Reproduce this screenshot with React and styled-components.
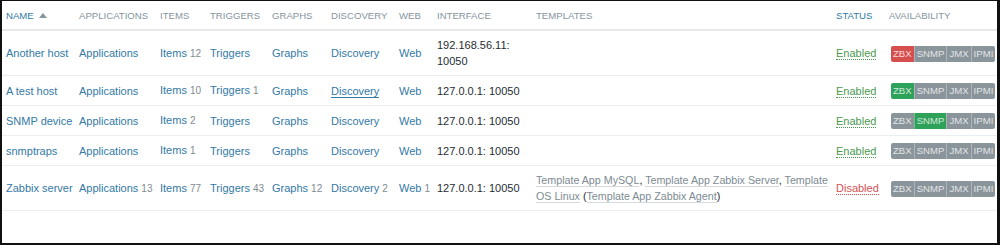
import React from 'react'
import styled, { createGlobalStyle } from 'styled-components'

const GlobalStyle = createGlobalStyle`
    html, body {
        margin: 0;
        padding: 0;
        background: #ffffff;
    }
    body {
        font-family: "Liberation Sans", Arial, sans-serif;
    }
`

const Frame = styled.div`
    box-sizing: border-box;
    width: 1000px;
    height: 245px;
    border-top: 1px solid #111;
    border-left: 2px solid #111;
    border-right: 3px solid #111;
    border-bottom: 2px solid #111;
    background: #fff;
    overflow: hidden;
`

const Table = styled.table`
    width: 995px;
    border-collapse: collapse;
    table-layout: fixed;
    font-size: 11px;
    color: #1f2c33;
`

const Th = styled.th`
    text-align: left;
    font-weight: normal;
    font-size: 9.6px;
    text-transform: uppercase;
    color: ${({ active }) => (active ? '#3379a6' : '#85959e')};
    padding: 0 4px;
    height: 28px;
    border-bottom: 2px solid #e6e9eb;
    white-space: nowrap;
`

const Arrow = styled.span`
    display: inline-block;
    margin-left: 5px;
    width: 0;
    height: 0;
    border-left: 4px solid transparent;
    border-right: 4px solid transparent;
    border-bottom: 5px solid #85959e;
    vertical-align: 1px;
`

const Tr = styled.tr`
    border-bottom: 1px solid #ebeef0;
`

const Td = styled.td`
    padding: 6px 4px;
    line-height: 16px;
    vertical-align: middle;
    white-space: ${({ wrap }) => (wrap ? 'normal' : 'nowrap')};
    font-size: ${({ small }) => (small ? '10.7px' : '11px')};
`

const Link = styled.a`
    color: #3379a6;
    text-decoration: none;
    border-bottom: ${({ underline }) => (underline ? '1px solid #3379a6' : 'none')};
`

const Count = styled.sup`
    vertical-align: baseline;
    font-size: 10px;
    color: #7f8a90;
    margin-left: 3px;
`

const TemplateLink = styled.a`
    color: #7d8b93;
    text-decoration: none;
    border-bottom: 1px solid #d5dadd;
`

const Status = styled.span`
    color: ${({ on }) => (on ? '#4a9a4e' : '#d35353')};
    border-bottom: 1px dotted ${({ on }) => (on ? '#4a9a4e' : '#d35353')};
`

const Badges = styled.div`
    display: inline-flex;
    border-radius: 2px;
    overflow: hidden;
    vertical-align: middle;
    margin-left: 2px;
`

const Badge = styled.span`
    font-size: 9.6px;
    line-height: 16px;
    padding: 0 2px;
    text-align: center;
    color: rgba(255, 255, 255, 0.78);
    background: ${({ state }) =>
        state === 'bad' ? '#d64f4f' : state === 'good' ? '#2fa25a' : '#8a949b'};
    border-left: 1px solid rgba(255, 255, 255, 0.3);
    &:first-child {
        border-left: none;
    }
`

const cols = [73, 81, 50, 62, 59, 68, 38, 99, 300, 53, 112]

const hosts = [
    {
        name: 'Another host',
        apps: null, items: 12, triggers: null, graphs: null, discovery: null, web: null,
        iface: ['192.168.56.11:', '10050'],
        enabled: true, avail: { ZBX: 'bad' },
    },
    {
        name: 'A test host',
        apps: null, items: 10, triggers: 1, graphs: null, discovery: null, web: null,
        iface: ['127.0.0.1: 10050'], discoveryUnderline: true,
        enabled: true, avail: { ZBX: 'good' },
    },
    {
        name: 'SNMP device',
        apps: null, items: 2, triggers: null, graphs: null, discovery: null, web: null,
        iface: ['127.0.0.1: 10050'],
        enabled: true, avail: { SNMP: 'good' },
    },
    {
        name: 'snmptraps',
        apps: null, items: 1, triggers: null, graphs: null, discovery: null, web: null,
        iface: ['127.0.0.1: 10050'],
        enabled: true, avail: {},
    },
    {
        name: 'Zabbix server',
        apps: 13, items: 77, triggers: 43, graphs: 12, discovery: 2, web: 1,
        iface: ['127.0.0.1: 10050'],
        templates: true,
        enabled: false, avail: {},
    },
]

const Cell = ({ label, count, underline }) => (
    <Td>
        <Link href="#" underline={underline}>{label}</Link>
        {count != null && <Count>{count}</Count>}
    </Td>
)

const App = () => {
    return (
        <Frame>
            <GlobalStyle />
            <Table>
                <colgroup>
                    {cols.map((w, i) => <col key={i} style={{ width: w }} />)}
                </colgroup>
                <thead>
                    <tr>
                        <Th active>Name<Arrow /></Th>
                        <Th>Applications</Th>
                        <Th>Items</Th>
                        <Th>Triggers</Th>
                        <Th>Graphs</Th>
                        <Th>Discovery</Th>
                        <Th>Web</Th>
                        <Th>Interface</Th>
                        <Th>Templates</Th>
                        <Th active>Status</Th>
                        <Th>Availability</Th>
                    </tr>
                </thead>
                <tbody>
                    {hosts.map((h) => (
                        <Tr key={h.name}>
                            <Cell label={h.name} />
                            <Cell label="Applications" count={h.apps} />
                            <Cell label="Items" count={h.items} />
                            <Cell label="Triggers" count={h.triggers} />
                            <Cell label="Graphs" count={h.graphs} />
                            <Cell label="Discovery" count={h.discovery} underline={h.discoveryUnderline} />
                            <Cell label="Web" count={h.web} />
                            <Td>
                                {h.iface.map((line, i) => <div key={i}>{line}</div>)}
                            </Td>
                            <Td wrap small>
                                {h.templates && (
                                    <>
                                        <TemplateLink href="#">Template App MySQL</TemplateLink>,{' '}
                                        <TemplateLink href="#">Template App Zabbix Server</TemplateLink>,{' '}
                                        <TemplateLink href="#">Template OS Linux</TemplateLink> (
                                        <TemplateLink href="#">Template App Zabbix Agent</TemplateLink>)
                                    </>
                                )}
                            </Td>
                            <Td>
                                <Status on={h.enabled}>{h.enabled ? 'Enabled' : 'Disabled'}</Status>
                            </Td>
                            <Td>
                                <Badges>
                                    {['ZBX', 'SNMP', 'JMX', 'IPMI'].map((k) => (
                                        <Badge key={k} state={h.avail[k]}>{k}</Badge>
                                    ))}
                                </Badges>
                            </Td>
                        </Tr>
                    ))}
                </tbody>
            </Table>
        </Frame>
    )
}

export default App
